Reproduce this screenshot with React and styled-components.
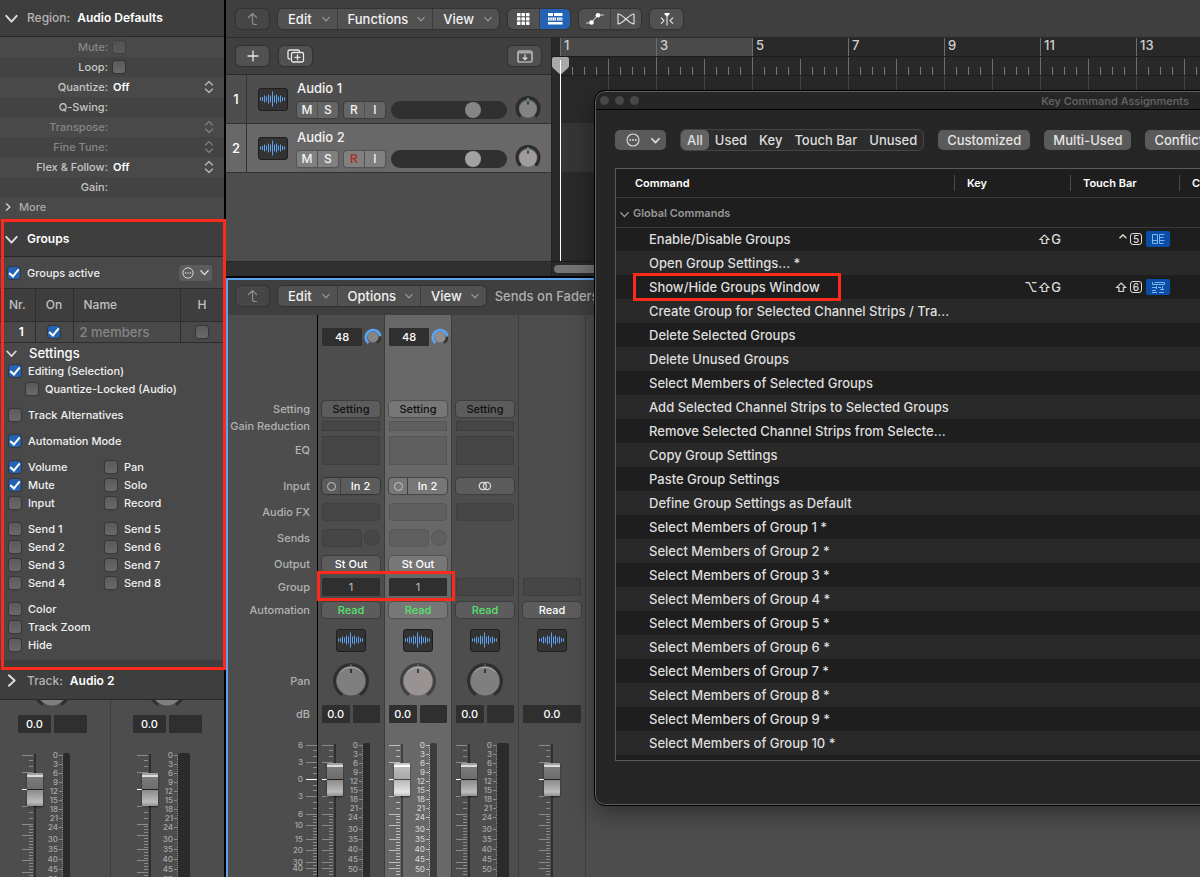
import React from "react";
import styled, { createGlobalStyle, css } from "styled-components";

const RED = "#fb2a1a";
const BLUE = "#2463b3";

const REGION_ROWS = [
  { label: "Mute:", check: true, dim: true },
  { label: "Loop:", check: true },
  { label: "Quantize:", value: "Off", stepper: true },
  { label: "Q-Swing:" },
  { label: "Transpose:", dim: true, stepper: true },
  { label: "Fine Tune:", dim: true, stepper: true },
  { label: "Flex & Follow:", value: "Off", stepper: true },
  { label: "Gain:" }
];

const SETTINGS = [
  [["Editing (Selection)", true]],
  [["Quantize-Locked (Audio)", false, true]],
  null,
  [["Track Alternatives", false]],
  null,
  [["Automation Mode", true]],
  null,
  [["Volume", true], ["Pan", false]],
  [["Mute", true], ["Solo", false]],
  [["Input", false], ["Record", false]],
  null,
  [["Send 1", false], ["Send 5", false]],
  [["Send 2", false], ["Send 6", false]],
  [["Send 3", false], ["Send 7", false]],
  [["Send 4", false], ["Send 8", false]],
  null,
  [["Color", false]],
  [["Track Zoom", false]],
  [["Hide", false]]
];

const COMMANDS = [
  { name: "Enable/Disable Groups", cmdKey: "⇧G", touch: "⌃", digit: "5", icon: "columns" },
  { name: "Open Group Settings... *" },
  { name: "Show/Hide Groups Window", cmdKey: "⌥⇧G", touch: "⇧", digit: "6", icon: "window", marked: true },
  { name: "Create Group for Selected Channel Strips / Tra..." },
  { name: "Delete Selected Groups" },
  { name: "Delete Unused Groups" },
  { name: "Select Members of Selected Groups" },
  { name: "Add Selected Channel Strips to Selected Groups" },
  { name: "Remove Selected Channel Strips from Selecte..." },
  { name: "Copy Group Settings" },
  { name: "Paste Group Settings" },
  { name: "Define Group Settings as Default" },
  ...Array.from({ length: 10 }, (_, i) => ({ name: `Select Members of Group ${i + 1} *` }))
];

const STRIPS = [
  { id: "Audio 1", gain: true, input: "In 2", sends: true, output: "St Out", group: "1", meter: 7 },
  { id: "Audio 2", gain: true, input: "In 2", sends: true, output: "St Out", group: "1", meter: 7, selected: true },
  { id: "Stereo Out", meter: 12, stereo: true },
  { id: "Master", master: true }
];

// rows of a channel strip, shared by the label column
const ROW = {
  gain: 1,
  setting: 3,
  reduction: 4,
  eq: 5,
  input: 7,
  fx: 8,
  sends: 9,
  output: 10,
  group: 11,
  automation: 12,
  icon: 13,
  pan: 14,
  db: 15,
  fader: 17
};

const LABELS = [
  [ROW.setting, "Setting"],
  [ROW.reduction, "Gain Reduction"],
  [ROW.eq, "EQ"],
  [ROW.input, "Input"],
  [ROW.fx, "Audio FX"],
  [ROW.sends, "Sends"],
  [ROW.output, "Output"],
  [ROW.group, "Group"],
  [ROW.automation, "Automation"],
  [ROW.pan, "Pan"],
  [ROW.db, "dB"]
];

const MAJOR = [
  [3, "6"],
  [20, "3"],
  [37, "0"],
  [54, "3"],
  [72, "6"],
  [83, "10"],
  [97, "15"],
  [108, "20"],
  [120, "30"],
  [126, "40"]
];
const MINOR = [8, 14, 25, 31, 43, 48, 60, 66, 74, 77, 80, 86, 89, 92, 95, 100, 103, 106, 111, 114, 117, 123, 129, 132];
const METER = [
  [3, "0"],
  [12, "3"],
  [21, "6"],
  [30, "9"],
  [39, "12"],
  [48, "15"],
  [57, "18"],
  [66, "21"],
  [75, "24"],
  [87, "30"],
  [97, "35"],
  [107, "40"],
  [117, "45"],
  [127, "50"]
];

/* ---------- drawings ---------- */

const Chevron = ({ size = 10, dir = "down", color = "#ddd", width = 1.5 }) => (
  <svg width={size} height={size} viewBox="0 0 10 10" fill="none" stroke={color} strokeWidth={width} strokeLinecap="round" strokeLinejoin="round" aria-hidden="true">
    <path d={dir === "down" ? "M1 3l4 4.4L9 3" : "M3 1l4.400 4L3 9"} />
  </svg>
);

const Stepper = ({ dim }) => (
  <svg width="10" height="14" viewBox="0 0 10 14" fill="none" stroke={dim ? "#7d7d7d" : "#b9b9b9"} strokeWidth="1.3" strokeLinecap="round" strokeLinejoin="round" aria-hidden="true">
    <path d="M1.500 5L5 1.500 8.500 5M1.500 9L5 12.500 8.500 9" />
  </svg>
);

const DotsIcon = ({ size = 14 }) => (
  <svg width={size} height={size} viewBox="0 0 14 14" fill="none" stroke="#ddd" aria-hidden="true">
    <circle cx="7" cy="7" r="6" strokeWidth="1.1" />
    <g fill="#ddd" stroke="none">
      <circle cx="4.200" cy="7" r=".9" />
      <circle cx="7" cy="7" r=".9" />
      <circle cx="9.800" cy="7" r=".9" />
    </g>
  </svg>
);

const UpIcon = () => (
  <svg width="14" height="14" viewBox="0 0 14 14" fill="none" stroke="#8c8c8c" strokeWidth="1.200" strokeLinecap="round" strokeLinejoin="round" aria-hidden="true">
    <path d="M2.500 5.500L6.500 1.500 10.500 5.500M6.500 1.500V10Q6.500 12.500 9 12.500H10.500" />
  </svg>
);

const PlusIcon = () => (
  <svg width="12" height="12" viewBox="0 0 12 12" stroke="#e8e8e8" strokeWidth="1.300" strokeLinecap="round" aria-hidden="true">
    <path d="M6 1v10M1 6h10" />
  </svg>
);

const DuplicateIcon = () => (
  <svg width="18" height="14" viewBox="0 0 18 14" fill="none" stroke="#e8e8e8" strokeWidth="1.300" strokeLinecap="round" strokeLinejoin="round" aria-hidden="true">
    <path d="M3 10H2.500A1.500 1.500 0 0 1 1 8.500V2.500A1.500 1.500 0 0 1 2.500 1H11A1.500 1.500 0 0 1 12.500 2.500" />
    <rect x="4.500" y="3.500" width="12" height="9.500" rx="1.500" />
    <path d="M10.500 5.800v5M8 8.300h5" />
  </svg>
);

const DropIcon = () => (
  <svg width="16" height="13" viewBox="0 0 16 13" fill="none" stroke="#ddd" strokeWidth="1.200" aria-hidden="true">
    <rect x="1" y="1" width="14" height="11" rx="1.200" />
    <path d="M1 2.500h14" strokeWidth="2" stroke="#aaa" />
    <path d="M8 4.500v5M5.800 7.500L8 9.700l2.200-2.200" />
  </svg>
);

const GridIcon = () => (
  <svg width="13" height="12" viewBox="0 0 13 12" fill="#fff" aria-hidden="true">
    {[0, 4.5, 9].map(x => [0, 4.3, 8.6].map(y => <rect key={`${x}-${y}`} x={x} y={y} width="3.500" height="3.300" rx=".4" />))}
  </svg>
);

const TracksIcon = () => (
  <svg width="15" height="12" viewBox="0 0 15 12" fill="#fff" aria-hidden="true">
    <path d="M0 0h5v3H0zM6 0h8.500v3H6zM0 4.500h8v3H0zM9 4.500h5.500v3H9zM0 9h14.500v2.600H0z" />
    <path d="M1 6h6M10 6h4" stroke={BLUE} strokeWidth=".9" strokeDasharray="1.500 1" />
  </svg>
);

const AutomationIcon = () => (
  <svg width="18" height="14" viewBox="0 0 18 14" fill="#fff" aria-hidden="true">
    <path d="M0 11h5L12 3h6" stroke="#ccc" strokeWidth="1.100" fill="none" />
    <circle cx="5.500" cy="10.500" r="2.300" />
    <circle cx="12" cy="3.300" r="2.300" />
  </svg>
);

const FlexIcon = () => (
  <svg width="18" height="12" viewBox="0 0 18 12" fill="none" stroke="#ddd" strokeWidth="1.200" strokeLinejoin="round" aria-hidden="true">
    <path d="M1 1C6 1 12 11 17 11V1C12 1 6 11 1 11z" />
  </svg>
);

const CatchIcon = () => (
  <svg width="14" height="14" viewBox="0 0 14 14" fill="none" stroke="#ddd" strokeWidth="1.200" strokeLinecap="round" strokeLinejoin="round" aria-hidden="true">
    <path d="M1.300 6l2.700 2.700-2.700 2.700M12.700 6L10 8.700l2.700 2.700M7 2v11" />
    <path d="M4.500 1h5v1.500L7 4.500 4.500 2.500z" fill="#fff" stroke="none" />
  </svg>
);

const StereoIcon = () => (
  <svg width="14" height="10" viewBox="0 0 14 10" fill="none" stroke="#ddd" strokeWidth="1.200" aria-hidden="true">
    <circle cx="4.800" cy="5" r="3.600" />
    <circle cx="9" cy="5" r="3.600" />
  </svg>
);

const ColumnsIcon = () => (
  <svg width="14" height="12" viewBox="0 0 14 12" fill="none" stroke="#7fb4f2" aria-hidden="true">
    <path d="M1.500 1.500h5v9h-5zM1.500 7.500h5M8.500 1.500v9M8.500 1.500h5M8.500 4.500h4M8.500 7.500h5M8.500 10.500h4" />
  </svg>
);

const WindowIcon = () => (
  <svg width="14" height="12" viewBox="0 0 14 12" fill="none" stroke="#7fb4f2" aria-hidden="true">
    <path d="M1.500 1v2.500h12v-2h-10M1 6.500h4M1 9.500h4M1 11.500h5M7 6.500h3M9 8.500h4M8 11.500h5M5.500 5v3M11.500 5v3" />
  </svg>
);

const WAVE = [3, 4, 7, 5, 9, 7, 15, 7, 9, 5, 7, 4, 3];
const Wave = () => (
  <svg width="26" height="16" viewBox="0 0 26 16" stroke="#5fa3ee" aria-hidden="true">
    {WAVE.map((h, i) => (
      <path key={i} d={`M${0.5 + i * 2} ${8 - h / 2}v${h}`} />
    ))}
  </svg>
);

const PanKnob = ({ selected }) => (
  <svg width="40" height="40" viewBox="0 0 40 40" role="img" aria-label="Pan">
    <path d="M11 33.800A16.500 16.500 0 1 1 29 33.800" fill="none" stroke={selected ? "#414141" : "#2f2f2f"} strokeWidth="3" />
    <circle cx="20" cy="20" r="14.500" fill={selected ? "#989292" : "#7f7f7f"} />
    <path d="M9 11.500A14 14 0 0 1 31 11.500" fill="none" stroke="#b9b9b9" strokeWidth=".8" />
    <path d="M20 3v3" stroke="#777" />
    <path d="M20 8v4" stroke="#111" strokeWidth="1.300" />
  </svg>
);

const TrackKnob = ({ selected }) => (
  <svg width="26" height="26" viewBox="0 0 26 26" role="img" aria-label="Pan">
    <path d="M5.500 21.500A11 11 0 1 1 20.500 21.500" fill="none" stroke="#2b2b2b" strokeWidth="3" />
    <circle cx="13" cy="14" r="8.800" fill={selected ? "#a09c9c" : "#838383"} />
    <path d="M13 3v3" stroke="#4ddc62" strokeWidth="1.200" />
    <path d="M13 6.500v3" stroke="#111" strokeWidth="1.300" />
  </svg>
);

const GainKnob = ({ selected }) => (
  <svg width="18" height="18" viewBox="0 0 18 18" role="img" aria-label="Gain">
    <path d="M13 15A7.300 7.300 0 0 0 16.300 9" fill="none" stroke="#333" strokeWidth="2.200" />
    <path d="M4.500 15A7.300 7.300 0 1 1 16.300 8" fill="none" stroke="#5aa4f4" strokeWidth="2.600" />
    <circle cx="9" cy="9" r="5.400" fill={selected ? "#938e8e" : "#858585"} />
  </svg>
);

const Scale = ({ meter, master, selected }) => {
  const dx = master ? 16 : 0;
  const tick = selected ? "#bdbdbd" : "#8b8b8b";
  return (
    <svg width="67" height="260" viewBox="0 0 67 260" aria-hidden="true">
      {MAJOR.map(([y], i) => (
        <path key={i} d={`M${4 + dx} ${y + 0.5}h11`} stroke={y === 37 ? "#fff" : tick} />
      ))}
      {MINOR.map(y => (
        <path key={y} d={`M${11 + dx} ${y + 0.5}h4`} stroke={tick} />
      ))}
      <path d={`M${17 + dx} 2v258`} stroke={selected ? "#414141" : "#2f2f2f"} strokeWidth="2" />
      {meter && (
        <g>
          {METER.map(([y, n]) => (
            <text key={n} x="40" y={y + 3} textAnchor="end" fontSize="8" fill={selected ? "#d0d0d0" : "#a8a8a8"}>
              {n}
            </text>
          ))}
          {METER.map(([y, n]) => (
            <path key={n} d={`M41 ${y + 0.5}h3`} stroke={tick} />
          ))}
          <path d="M44.500 3v257" stroke={tick} strokeDasharray="1 1" />
          <rect x="45" y="1" width={meter} height="262" rx="2" fill={selected ? "#3c3c3c" : "#2b2b2b"} />
        </g>
      )}
    </svg>
  );
};

const LabelScale = () => (
  <svg width="30" height="260" viewBox="0 0 30 260" aria-hidden="true">
    {MAJOR.map(([y, n], i) => (
      <g key={i}>
        <text x="16" y={y + 3} textAnchor="end" fontSize="8" fill="#a8a8a8">
          {n}
        </text>
        <path d={`M19 ${y + 0.5}h11`} stroke={y === 37 ? "#fff" : "#8b8b8b"} />
      </g>
    ))}
    {MINOR.map(y => (
      <path key={y} d={`M26 ${y + 0.5}h4`} stroke="#8b8b8b" />
    ))}
  </svg>
);

/* ---------- components ---------- */

const Check = ({ label, checked, dim }) => <CheckInput type="checkbox" aria-label={label} defaultChecked={checked} $dim={dim} />;

const FaderUnit = props => (
  <FaderStack>
    <Scale {...props} />
    <FaderInput type="range" min="0" max="225" defaultValue="206" aria-label="Volume" $master={props.master} $selected={props.selected} />
  </FaderStack>
);

const RegionPanel = () => (
  <section>
    <PanelHead $h={37}>
      <Chevron size={13} />
      <PanelKind>Region:</PanelKind>
      <b>Audio Defaults</b>
    </PanelHead>
    {REGION_ROWS.map((row, i) => (
      <ParamRow key={row.label} $odd={i % 2}>
        <ParamLabel $dim={row.dim}>{row.label}</ParamLabel>
        {row.check && <Check label={row.label} dim={row.dim} />}
        {row.value && (
          <ParamSelect aria-label={row.label}>
            <option>{row.value}</option>
          </ParamSelect>
        )}
        <Grow />
        {row.stepper && <Stepper dim={row.dim} />}
      </ParamRow>
    ))}
    <MoreButton>
      <Chevron size={8} dir="right" />
      More
    </MoreButton>
  </section>
);

const GroupsPanel = () => (
  <GroupsBox>
    <PanelHead $h={35}>
      <Chevron size={13} />
      <b>Groups</b>
    </PanelHead>
    <ActiveRow>
      <CheckLabel>
        <CheckInput type="checkbox" defaultChecked />
        Groups active
      </CheckLabel>
      <MiniMenu aria-label="Group actions">
        <DotsIcon size={12} />
        <Chevron size={9} />
      </MiniMenu>
    </ActiveRow>
    <GroupTable>
      <thead>
        <tr>
          <th>Nr.</th>
          <th>On</th>
          <th>Name</th>
          <th>H</th>
        </tr>
      </thead>
      <tbody>
        <tr>
          <td>1</td>
          <td>
            <Check label="Group 1 on" checked />
          </td>
          <td>2 members</td>
          <td>
            <Check label="Group 1 hidden" />
          </td>
        </tr>
      </tbody>
    </GroupTable>
    <SettingsHead>
      <Chevron size={11} />
      Settings
    </SettingsHead>
    <SettingsList>
      {SETTINGS.map((row, i) =>
        row ? (
          <SettingRow key={i}>
            {row.map(([name, checked, indent]) => (
              <SettingLabel key={name} $indent={indent} $wide={row.length === 1}>
                <CheckInput type="checkbox" defaultChecked={checked} />
                {name}
              </SettingLabel>
            ))}
          </SettingRow>
        ) : (
          <SettingGap key={i} />
        )
      )}
    </SettingsList>
  </GroupsBox>
);

const InspectorStrips = () => (
  <SideStrips>
    {[7, 12].map((meter, i) => (
      <SideStrip key={meter} $second={i}>
        <KnobPeek>
          <PanKnob />
        </KnobPeek>
        <DbPair>
          <Field>0.0</Field>
          <Field />
        </DbPair>
        <FaderUnit meter={meter} />
      </SideStrip>
    ))}
  </SideStrips>
);

const Menus = ({ items }) => (
  <Segment>
    {items.map(([name, gap]) => (
      <MenuButton key={name} $gap={gap}>
        {name}
        <Chevron size={8} color="#999" />
      </MenuButton>
    ))}
  </Segment>
);

const Track = ({ number, selected }) => (
  <TrackRow $selected={selected}>
    <TrackNumber>{number}</TrackNumber>
    <WaveBox>
      <Wave />
    </WaveBox>
    <TrackBody>
      <TrackName>Audio {number}</TrackName>
      <TrackControls>
        <TrackPair $selected={selected}>
          <button>M</button>
          <button>S</button>
        </TrackPair>
        <TrackPair $selected={selected} $armed={selected}>
          <button>R</button>
          <button>I</button>
        </TrackPair>
        <VolumeInput type="range" min="0" max="98" defaultValue="73" aria-label={`Audio ${number} volume`} $selected={selected} />
      </TrackControls>
    </TrackBody>
    <TrackKnobCell>
      <TrackKnob selected={selected} />
    </TrackKnobCell>
  </TrackRow>
);

const Strip = ({ strip }) => {
  const { selected, master, stereo, gain, input, sends, output, group, meter } = strip;
  return (
    <StripBox $selected={selected} aria-label={strip.id}>
      {gain && (
        <Cell $row={ROW.gain}>
          <Field $w={40}>48</Field>
          <GainKnob selected={selected} />
        </Cell>
      )}
      {!master && (
        <>
          <Cell $row={ROW.setting}>
            <StripButton $dark $selected={selected}>Setting</StripButton>
          </Cell>
          <Cell $row={ROW.reduction}>
            <Slot $h={10} />
          </Cell>
          <Cell $row={ROW.eq}>
            <Slot $h={29} />
          </Cell>
          <Cell $row={ROW.input}>
            {stereo ? (
              <StripButton aria-label="Stereo format">
                <StereoIcon />
              </StripButton>
            ) : (
              <InputPair $selected={selected}>
                <button aria-label="Mono format">
                  <Ring />
                </button>
                <button>{input}</button>
              </InputPair>
            )}
          </Cell>
          <Cell $row={ROW.fx}>
            <Slot $h={18} $round />
          </Cell>
        </>
      )}
      {sends && (
        <Cell $row={ROW.sends}>
          <Slot $h={18} $w={40} $round />
          <Slot $h={16} $w={16} $circle />
        </Cell>
      )}
      {output && (
        <Cell $row={ROW.output}>
          <StripButton $selected={selected}>{output}</StripButton>
        </Cell>
      )}
      <Cell $row={ROW.group}>{group ? <GroupField>{group}</GroupField> : <Slot $h={18} />}</Cell>
      <Cell $row={ROW.automation}>
        <StripButton $green={!master} $selected={selected}>Read</StripButton>
      </Cell>
      <Cell $row={ROW.icon} $center>
        <WaveBox>
          <Wave />
        </WaveBox>
      </Cell>
      {!master && (
        <Cell $row={ROW.pan} $center>
          <PanKnob selected={selected} />
        </Cell>
      )}
      <Cell $row={ROW.db}>
        {master ? (
          <Field>0.0</Field>
        ) : (
          <DbPair>
            <Field>0.0</Field>
            <Field />
          </DbPair>
        )}
      </Cell>
      <FaderCell>
        <FaderUnit meter={meter} master={master} selected={selected} />
      </FaderCell>
    </StripBox>
  );
};

const Mixer = () => (
  <MixerBox>
    <MixerBar>
      <IconButton disabled aria-label="Up">
        <UpIcon />
      </IconButton>
      <Menus items={[["Edit", 10], ["Options", 9], ["View", 9]]} />
      <SendsText>Sends on Faders:</SendsText>
    </MixerBar>
    <MixerBody>
      <LabelColumn>
        {LABELS.map(([row, text]) => (
          <RowLabel key={text} $row={row}>
            {text}
          </RowLabel>
        ))}
        <LabelFader>
          <LabelScale />
        </LabelFader>
      </LabelColumn>
      {STRIPS.map(strip => (
        <Strip key={strip.id} strip={strip} />
      ))}
      <GroupOutline />
    </MixerBody>
  </MixerBox>
);

const CommandWindow = () => (
  <WindowBox>
    <TitleBar>
      <Lights>
        <i />
        <i />
        <i />
      </Lights>
      <span>Key Command Assignments</span>
    </TitleBar>
    <WindowTools>
      <PillButton $menu aria-label="Options">
        <DotsIcon />
        <Chevron size={9} width={1.8} />
      </PillButton>
      <Filter>
        {["All", "Used", "Key", "Touch Bar", "Unused"].map(name => (
          <FilterButton key={name} $on={name === "All"}>
            {name}
          </FilterButton>
        ))}
      </Filter>
      <PillButton>Customized</PillButton>
      <PillButton>Multi-Used</PillButton>
      <PillButton>Conflicts</PillButton>
    </WindowTools>
    <TableFrame>
      <CommandTable>
        <colgroup>
          <col width="338" />
          <col width="116" />
          <col width="109" />
          <col />
        </colgroup>
        <thead>
          <tr>
            <th>Command</th>
            <th>Key</th>
            <th>Touch Bar</th>
            <th>Controller</th>
          </tr>
        </thead>
        <tbody>
          <SectionRow>
            <td colSpan="4">
              <Chevron size={9} color="#999" />
              Global Commands
            </td>
          </SectionRow>
          {COMMANDS.map(c => (
            <CommandRow key={c.name}>
              <td>
                <CommandName $marked={c.marked}>{c.name}</CommandName>
              </td>
              <KeyCell>{c.cmdKey}</KeyCell>
              <td>
                {c.icon && (
                  <TouchCell>
                    {c.touch}
                    <Digit>{c.digit}</Digit>
                    <TouchIcon>{c.icon === "columns" ? <ColumnsIcon /> : <WindowIcon />}</TouchIcon>
                  </TouchCell>
                )}
              </td>
              <td />
            </CommandRow>
          ))}
        </tbody>
      </CommandTable>
    </TableFrame>
  </WindowBox>
);

const App = () => (
  <>
    <GlobalStyle />
    <Page>
      <Sidebar>
        <RegionPanel />
        <GroupsPanel />
        <PanelHead $h={30} $raised>
          <Chevron size={13} dir="right" />
          <PanelKind>Track:</PanelKind>
          <b>Audio 2</b>
        </PanelHead>
        <InspectorStrips />
      </Sidebar>
      <Main>
        <TopBar>
          <IconButton disabled aria-label="Up">
            <UpIcon />
          </IconButton>
          <Menus items={[["Edit", 10], ["Functions", 9], ["View", 10]]} />
          <Segment>
            <ToolButton aria-label="Live loops">
              <GridIcon />
            </ToolButton>
            <ToolButton $on aria-label="Tracks">
              <TracksIcon />
            </ToolButton>
          </Segment>
          <Segment>
            <ToolButton aria-label="Automation">
              <AutomationIcon />
            </ToolButton>
            <ToolButton aria-label="Flex">
              <FlexIcon />
            </ToolButton>
          </Segment>
          <IconButton aria-label="Catch playhead">
            <CatchIcon />
          </IconButton>
        </TopBar>
        <Arrange>
          <TrackList>
            <TrackBar>
              <IconButton aria-label="Add track">
                <PlusIcon />
              </IconButton>
              <IconButton aria-label="Duplicate track">
                <DuplicateIcon />
              </IconButton>
              <Grow />
              <IconButton aria-label="Track drop">
                <DropIcon />
              </IconButton>
            </TrackBar>
            <Track number={1} />
            <Track number={2} selected />
            <TrackFill />
            <TrackFoot />
          </TrackList>
          <Timeline>
            <RulerTop>
              {[1, 3, 5, 7, 9, 11, 13].map(bar => (
                <BarCell key={bar} $cycle={bar < 5}>
                  {bar}
                </BarCell>
              ))}
            </RulerTop>
            <RulerTicks />
            <Lanes>
              <LaneSelected />
            </Lanes>
            <ScrollTrack>
              <ScrollThumb />
            </ScrollTrack>
            <Playhead>
              <svg width="17" height="17" viewBox="0 0 17 17" aria-hidden="true">
                <path d="M2 0h13q2 0 2 2v7q0 1-1 2l-6 5.500q-1.500 1-3 0L1 11q-1-1-1-2V2q0-2 2-2z" fill="#a9a9a9" />
              </svg>
            </Playhead>
          </Timeline>
        </Arrange>
        <Mixer />
      </Main>
      <CommandWindow />
    </Page>
  </>
);

/* ---------- styles ---------- */

const GlobalStyle = createGlobalStyle`
  * {
    box-sizing: border-box;
  }

  body {
    margin: 0;
    background: #000;
    color: #ddd;
    font: 500 11px/16px Inter, "DejaVu Sans", sans-serif;
  }

  button, input, select {
    margin: 0;
    padding: 0;
    border: 0;
    font: inherit;
    color: inherit;
    background: none;
  }

  svg {
    display: block;
    flex: none;
  }

  b {
    font-weight: 600;
    color: #fff;
  }
`;

const Grow = styled.div`
  flex: 1;
`;

const Page = styled.div`
  position: relative;
  display: flex;
  height: 100vh;
  overflow: hidden;
`;

const Sidebar = styled.aside`
  display: flex;
  flex-direction: column;
  width: 224px;
  flex: none;
  background: #494949;
`;

const Main = styled.main`
  display: flex;
  flex-direction: column;
  flex: 1;
  min-width: 0;
  margin-left: 2px;
`;

const PanelHead = styled.div`
  display: flex;
  align-items: center;
  flex: none;
  height: ${props => props.$h}px;
  padding: 0 0 ${props => (props.$raised ? "7px" : "0")} 5px;
  background: #3e3e3e;
  border-bottom: 1px solid #282828;
  font-size: 12px;

  svg {
    margin-right: 9px;
  }
`;

const PanelKind = styled.span`
  margin-right: 7px;
  color: #b4b4b4;
`;

const ParamRow = styled.div`
  display: flex;
  align-items: center;
  height: 20px;
  padding-right: 10px;
  background: ${props => (props.$odd ? "#434343" : "#494949")};
`;

const ParamLabel = styled.span`
  width: 108px;
  margin-right: 5px;
  text-align: right;
  color: ${props => (props.$dim ? "#868686" : "#c6c6c6")};
`;

const ParamSelect = styled.select`
  appearance: none;
  width: 80px;
  color: #fff;
  font-weight: 600;
`;

const MoreButton = styled.button`
  display: flex;
  align-items: center;
  gap: 7px;
  height: 20px;
  margin-bottom: 5px;
  padding-left: 4px;
  color: #aaa;
`;

const CheckInput = styled.input`
  appearance: none;
  display: grid;
  place-items: center;
  flex: none;
  width: 12px;
  height: 12px;
  border-radius: 3px;
  background: linear-gradient(#5a5a5a, #6a6a6a);
  box-shadow: 0 0 1px 1px rgba(0, 0, 0, 0.25);
  opacity: ${props => (props.$dim ? 0.5 : 1)};

  &:checked {
    background: ${BLUE};
  }

  &:checked::after {
    content: "";
    width: 4px;
    height: 8px;
    margin-bottom: 2px;
    border: solid #fff;
    border-width: 0 2px 2px 0;
    transform: rotate(40deg);
  }
`;

const GroupsBox = styled.section`
  position: relative;

  &::after {
    content: "";
    position: absolute;
    inset: -3px -2px 0 1px;
    z-index: 2;
    border: 3px solid ${RED};
    pointer-events: none;
  }
`;

const ActiveRow = styled.div`
  display: flex;
  align-items: center;
  justify-content: space-between;
  height: 32px;
  padding: 0 12px 0 8px;
  border-bottom: 1px solid #2e2e2e;
  color: #eee;
`;

const CheckLabel = styled.label`
  display: flex;
  align-items: center;
  gap: 7px;
`;

const MiniMenu = styled.button`
  display: flex;
  align-items: center;
  justify-content: center;
  gap: 6px;
  width: 33px;
  height: 16px;
  border-radius: 4px;
  background: #5c5c5c;
`;

const GroupTable = styled.table`
  width: 100%;
  table-layout: fixed;
  border-collapse: collapse;
  font-size: 12px;
  text-align: center;

  th,
  td {
    padding: 0;
    border-right: 1px solid #2e2e2e;
    border-bottom: 1px solid #2e2e2e;
  }

  th {
    height: 32px;
    background: #3e3e3e;
    font-weight: 500;
    color: #c0c0c0;
  }

  td {
    height: 21px;
    font-weight: 600;
    color: #fff;
  }

  th:nth-child(1) {
    width: 35px;
  }

  th:nth-child(2) {
    width: 38px;
  }

  th:nth-child(3) {
    padding-left: 10px;
    text-align: left;
  }

  th:nth-child(4) {
    width: 43px;
  }

  td:nth-child(1) {
    padding-left: 8px;
  }

  td:nth-child(3) {
    padding-left: 6px;
    text-align: left;
    font-size: 13px;
    font-weight: 500;
    color: #858585;
  }

  input {
    margin: 0 auto;
  }
`;

const SettingsHead = styled.div`
  display: flex;
  align-items: center;
  gap: 12px;
  height: 19px;
  padding: 2px 0 0 6px;
  font-size: 13px;
  color: #fff;
`;

const SettingsList = styled.div`
  padding-bottom: 6px;
  border-bottom: 10px solid #3e3e3e;
  color: #f0f0f0;
`;

const SettingRow = styled.div`
  display: flex;
  height: 18px;
  padding-left: 9px;
`;

const SettingLabel = styled.label`
  display: flex;
  align-items: center;
  gap: 7px;
  width: ${props => (props.$wide ? "auto" : "96px")};
  margin-left: ${props => (props.$indent ? "17px" : "0")};
`;

const SettingGap = styled.div`
  height: 8px;
`;

const SideStrips = styled.div`
  display: flex;
  flex: 1;
  min-height: 0;
  overflow: hidden;
  background: #4d4d4d;
`;

const SideStrip = styled.div`
  display: grid;
  grid-template-rows: 14px 20px 18px 260px;
  align-content: start;
  align-items: center;
  width: 111px;
  padding-left: ${props => (props.$second ? "22px" : "18px")};
  ${props => !props.$second && "border-right: 1px solid #3c3c3c;"}

  & > :nth-child(3) {
    grid-row: 4;
    align-self: start;
  }

  & > :nth-child(2) {
    width: 69px;
  }
`;

const KnobPeek = styled.div`
  display: flex;
  align-items: flex-end;
  justify-content: center;
  align-self: stretch;
  height: 14px;
  width: 68px;
  padding-bottom: 3px;
  overflow: hidden;
`;

const FaderStack = styled.div`
  display: grid;
  width: 67px;

  & > * {
    grid-area: 1 / 1;
  }
`;

const thumb = props => css`
  background: linear-gradient(
    ${props.$selected
      ? "#c8c8c8 0 2px, #fff 2px 4px, #bdbdbd 4px, #a8a8a8 16px, #444 16px 17px, #b8b8b8 17px, #e4e4e4 29px, #bbb"
      : "#a0a0a0 0 2px, #dcdcdc 2px 4px, #7c7c7c 4px, #6c6c6c 16px, #222 16px 17px, #8b8b8b 17px, #bcbcbc 29px, #8f8f8f"}
  );
`;

const FaderInput = styled.input`
  appearance: none;
  writing-mode: vertical-lr;
  direction: rtl;
  width: 16px;
  height: 258px;
  margin: 2px 0 0 ${props => (props.$master ? "25px" : "9px")};

  &::-webkit-slider-thumb {
    appearance: none;
    width: 16px;
    height: 33px;
    border-radius: 1px;
    box-shadow: 0 1px 2px rgba(0, 0, 0, 0.6);
    ${thumb}
  }
`;

const TopBar = styled.div`
  display: flex;
  align-items: center;
  gap: 9px;
  height: 38px;
  padding-left: 10px;
  background: #3f3f3f;
  border-bottom: 1px solid #2b2b2b;
`;

const IconButton = styled.button`
  display: flex;
  align-items: center;
  justify-content: center;
  width: 33px;
  height: 20px;
  border-radius: 5px;
  background: ${props => (props.disabled ? "#464646" : "#515151")};
  box-shadow: 0 0 1px 1px rgba(0, 0, 0, 0.2);
`;

const Segment = styled.div`
  display: flex;
  height: 20px;
  border-radius: 5px;
  background: #515151;
  box-shadow: 0 0 1px 1px rgba(0, 0, 0, 0.2);
  overflow: hidden;

  & > * + * {
    border-left: 1px solid #3c3c3c;
  }
`;

const MenuButton = styled.button`
  display: flex;
  align-items: center;
  gap: ${props => props.$gap}px;
  padding: 0 7px 0 10px;
  font-size: 13px;
  color: #f2f2f2;
`;

const ToolButton = styled.button`
  display: flex;
  align-items: center;
  justify-content: center;
  width: 31px;
  background: ${props => (props.$on ? BLUE : "none")};
`;

const Arrange = styled.div`
  display: flex;
  height: 238px;
`;

const TrackList = styled.div`
  display: flex;
  flex-direction: column;
  width: 326px;
  flex: none;
  border-right: 1px solid #222;
`;

const TrackBar = styled.div`
  display: flex;
  align-items: center;
  gap: 10px;
  height: 37px;
  padding: 0 10px 0 10px;
  background: #3f3f3f;
  border-bottom: 1px solid #2b2b2b;
`;

const TrackRow = styled.div`
  display: flex;
  align-items: center;
  height: 49px;
  border-bottom: 1px solid #333;
  background: ${props => (props.$selected ? "#686868" : "#4e4e4e")};
`;

const TrackNumber = styled.div`
  display: grid;
  place-items: center;
  width: 21px;
  height: 100%;
  margin-right: 11px;
  border-right: 1px solid #333;
  font-size: 13px;
  color: #fff;
`;

const WaveBox = styled.div`
  display: grid;
  place-items: center;
  width: 30px;
  height: 23px;
  border: 1px solid #1e1e1e;
  border-radius: 3px;
  background: #333;
`;

const TrackBody = styled.div`
  width: 220px;
  padding-left: 9px;
`;

const TrackName = styled.div`
  margin-bottom: 5px;
  font-size: 13px;
  color: #f2f2f2;
`;

const TrackControls = styled.div`
  display: flex;
  align-items: center;
  gap: 6px;
`;

const TrackPair = styled.div`
  display: flex;
  height: 16px;
  border-radius: 3px;
  overflow: hidden;
  background: ${props => (props.$selected ? "#808080" : "#656565")};
  box-shadow: 0 0 1px 1px rgba(0, 0, 0, 0.2);

  button {
    width: 20px;
    font-size: 12px;
    line-height: 16px;
    color: #f2f2f2;
  }

  button:first-child {
    width: 21px;
    border-right: 1px solid #505050;
    ${props => props.$armed && "color: #ad2a20;"}
  }
`;

const VolumeInput = styled.input`
  appearance: none;
  width: 116px;
  height: 18px;
  flex: none;
  padding: 0 1px;
  border-radius: 9px;
  background: #303030;

  &::-webkit-slider-thumb {
    appearance: none;
    width: 16px;
    height: 16px;
    border-radius: 50%;
    background: ${props => (props.$selected ? "#a2a2a2" : "#858585")};
  }
`;

const TrackKnobCell = styled.div`
  align-self: flex-end;
  margin-left: 7px;
  padding-bottom: 2px;
`;

const TrackFill = styled.div`
  flex: 1;
  background: #4d4d4d;
`;

const TrackFoot = styled.div`
  height: 15px;
  background: #303030;
  border-top: 1px solid #282828;
`;

const Timeline = styled.div`
  position: relative;
  display: flex;
  flex-direction: column;
  flex: 1;
  min-width: 0;
  background: #292929;
`;

const RulerTop = styled.div`
  display: flex;
  height: 19px;
  padding-left: 8px;
  overflow: hidden;
  border-bottom: 1px solid #1c1c1c;
`;

const BarCell = styled.div`
  width: 96px;
  flex: none;
  padding-left: 3px;
  border-left: 1px solid #6e6e6e;
  font-size: 13px;
  line-height: 15px;
  color: #d0d0d0;
  background: ${props => (props.$cycle ? "#4a4a4a" : "none")};
`;

const RulerTicks = styled.div`
  height: 19px;
  margin-left: 8px;
  border-bottom: 1px solid #1c1c1c;
  background: repeating-linear-gradient(90deg, #6e6e6e 0 1px, transparent 1px 96px),
    repeating-linear-gradient(90deg, #6e6e6e 0 1px, transparent 1px 48px) 0 2px no-repeat,
    repeating-linear-gradient(90deg, #777 0 1px, transparent 1px 12px) 0 10px no-repeat;
`;

const Lanes = styled.div`
  flex: 1;
  margin-left: 8px;
  padding-top: 47px;
  background: repeating-linear-gradient(90deg, #484848 0 1px, transparent 1px 48px);
`;

const LaneSelected = styled.div`
  height: 49px;
  background: rgba(255, 255, 255, 0.06);
`;

const ScrollTrack = styled.div`
  height: 15px;
  padding: 3px 2px;
  border-top: 1px solid #1c1c1c;
`;

const ScrollThumb = styled.div`
  height: 8px;
  border-radius: 4px;
  background: #747474;
`;

const Playhead = styled.div`
  position: absolute;
  top: 19px;
  left: 0;
  bottom: 15px;
  background: linear-gradient(#fff, #fff) 8px 0 / 1px 100% no-repeat;

  &::after {
    content: "";
    position: absolute;
    top: 3px;
    left: 8px;
    width: 1px;
    height: 16px;
    background: #fff;
  }
`;

const MixerBox = styled.section`
  display: flex;
  flex-direction: column;
  flex: 1;
  min-height: 0;
  margin-top: 2px;
  border: solid #5ba3f0;
  border-width: 2px 0 0 2px;
  background: #4d4d4d;
`;

const MixerBar = styled.div`
  display: flex;
  align-items: center;
  gap: 9px;
  height: 35px;
  flex: none;
  padding: 0 0 3px 8px;
  background: #3f3f3f;
`;

const SendsText = styled.span`
  font-size: 13px;
  color: #b0b0b0;
`;

const MixerBody = styled.div`
  position: relative;
  display: flex;
  flex: 1;
  min-height: 0;
  overflow: hidden;
`;

const stripRows = css`
  display: grid;
  flex: none;
  align-content: start;
  grid-template-columns: minmax(0, 1fr);
  grid-template-rows: 44px 41px 18px 16px 32px 7px 26px 26px 26px 26px 20px 25px 36px 46px 20px 18px 260px;
`;

const LabelColumn = styled.div`
  ${stripRows}
  width: 90px;
  border-right: 1px solid #000;
`;

const RowLabel = styled.span`
  grid-row: ${props => props.$row};
  align-self: center;
  justify-self: end;
  padding-right: 7px;
  white-space: nowrap;
  color: #b2b2b2;
`;

const LabelFader = styled.div`
  grid-row: ${ROW.fader};
  justify-self: end;
`;

const StripBox = styled.div`
  ${stripRows}
  width: 67px;
  border-right: 1px solid #3c3c3c;
  background: ${props => (props.$selected ? "#686868" : "#4d4d4d")};
`;

const Cell = styled.div`
  grid-row: ${props => props.$row};
  display: flex;
  align-items: center;
  justify-content: ${props => (props.$center ? "center" : "flex-start")};
  gap: 2px;
  padding: 0 4px;
`;

const FaderCell = styled.div`
  grid-row: ${ROW.fader};
`;

const Field = styled.div`
  flex: ${props => (props.$w ? "none" : "1")};
  width: ${props => (props.$w ? `${props.$w}px` : "auto")};
  height: 18px;
  line-height: 18px;
  border-radius: 1px;
  background: #2f2f2f;
  text-align: center;
  color: #fff;
`;

const DbPair = styled.div`
  display: flex;
  flex: 1;
  gap: 3px;
`;

const GroupField = styled(Field)`
  font-weight: 400;
  color: #c4b8b6;
`;

const StripButton = styled.button`
  display: flex;
  align-items: center;
  justify-content: center;
  width: 100%;
  height: 16px;
  border-radius: 4px;
  background: ${props => (props.$selected ? "#777" : "#5c5c5c")};
  box-shadow: 0 0 1px 1px rgba(0, 0, 0, 0.22);
  color: ${props => (props.$dark ? "#111" : props.$green ? "#55e36c" : "#fff")};
`;

const InputPair = styled.div`
  display: flex;
  width: 100%;
  height: 16px;
  border-radius: 4px;
  background: ${props => (props.$selected ? "#777" : "#5c5c5c")};
  box-shadow: 0 0 1px 1px rgba(0, 0, 0, 0.35);

  button {
    flex: 1;
    color: #fff;
  }

  button:first-child {
    display: grid;
    place-items: center;
    flex: none;
    width: 19px;
    border-right: 1px solid #3f3f3f;
  }
`;

const Ring = styled.i`
  width: 9px;
  height: 9px;
  border: 1px solid #c4c4c4;
  border-radius: 50%;
`;

const Slot = styled.div`
  flex: ${props => (props.$w ? "none" : "1")};
  width: ${props => (props.$w ? `${props.$w}px` : "auto")};
  height: ${props => props.$h}px;
  border: 1px solid rgba(0, 0, 0, 0.1);
  border-radius: ${props => (props.$circle ? "50%" : props.$round ? "4px" : "0")};
  background: rgba(0, 0, 0, 0.08);
`;

/* frames the group slots of the first two strips */
const GroupOutline = styled.div`
  position: absolute;
  top: 256px;
  left: 89px;
  width: 138px;
  height: 30px;
  border: 3px solid ${RED};
  pointer-events: none;
`;

const WindowBox = styled.section`
  position: absolute;
  top: 91px;
  left: 595px;
  width: 1036px;
  padding-bottom: 43px;
  border: 1px solid #5e5e5e;
  border-radius: 10px;
  outline: 1px solid #000;
  background: #262626;
  box-shadow: 0 8px 24px rgba(0, 0, 0, 0.4);
`;

const TitleBar = styled.div`
  display: grid;
  grid-template-columns: 1fr auto 1fr;
  align-items: center;
  height: 18px;
  padding-left: 4px;
  border-bottom: 1px solid #000;
  font-size: 11px;
  color: #666;
`;

const Lights = styled.div`
  display: flex;
  gap: 6px;

  i {
    width: 9px;
    height: 9px;
    border-radius: 50%;
    background: #474747;
  }
`;

const WindowTools = styled.div`
  display: flex;
  align-items: center;
  gap: 14px;
  padding: 19px 19px 17px;
`;

const PillButton = styled.button`
  display: flex;
  align-items: center;
  gap: 11px;
  height: 20px;
  padding: 0 ${props => (props.$menu ? "6px 0 11px" : "9px")};
  border-radius: 5px;
  background: #5a5a5a;
  font-size: 13px;
  color: #e4e4e4;
`;

const Filter = styled.div`
  display: flex;
  height: 22px;
  border: 1px solid #454545;
  border-radius: 6px;
  background: #2c2c2c;
`;

const FilterButton = styled.button`
  padding: 0 6px;
  border-radius: 5px;
  background: ${props => (props.$on ? "#636363" : "none")};
  font-size: 13px;
  color: #dedede;
`;

const TableFrame = styled.div`
  margin: 0 19px;
  padding-bottom: 5px;
  border: 1px solid #5a5a5a;
  background: #1e1e1e;
`;

const CommandTable = styled.table`
  width: 100%;
  table-layout: fixed;
  border-collapse: collapse;

  th {
    height: 28px;
    padding: 0 0 0 13px;
    border-bottom: 1px solid #3a3a3a;
    background: linear-gradient(#4a4a4a, #4a4a4a) 0 6px / 1px 16px no-repeat;
    text-align: left;
    font-weight: 600;
    color: #fff;
  }

  th:first-child {
    padding-left: 19px;
    background: none;
  }
`;

const SectionRow = styled.tr`
  td {
    height: 30px;
    padding: 2px 0 0 4px;
    border-bottom: 1px solid #3a3a3a;
    font-weight: 600;
    color: #979797;
  }

  svg {
    display: inline-block;
    margin-right: 4px;
    vertical-align: middle;
  }
`;

const CommandRow = styled.tr`
  font-size: 13px;
  color: #dedede;

  &:nth-child(odd) {
    background: #292929;
  }

  td {
    height: 24px;
    padding: 0 10px 0 33px;
    white-space: nowrap;
  }

  td + td {
    padding: 0 9px 0 0;
  }
`;

const CommandName = styled.span`
  position: relative;

  ${props =>
    props.$marked &&
    css`
      &::after {
        content: "";
        position: absolute;
        inset: -6px -21px -6px -16px;
        border: 3px solid ${RED};
      }
    `}
`;

const KeyCell = styled.td`
  text-align: right;
`;

const TouchCell = styled.div`
  display: flex;
  align-items: center;
  justify-content: flex-end;
  gap: 2px;
`;

const Digit = styled.span`
  width: 12px;
  height: 12px;
  border: 1px solid #ddd;
  border-radius: 3px;
  font-size: 10px;
  line-height: 10px;
  text-align: center;
`;

const TouchIcon = styled.span`
  display: grid;
  place-items: center;
  width: 24px;
  height: 16px;
  margin-left: 2px;
  border-radius: 2px;
  background: #0b4ea8;
`;

export default App;
